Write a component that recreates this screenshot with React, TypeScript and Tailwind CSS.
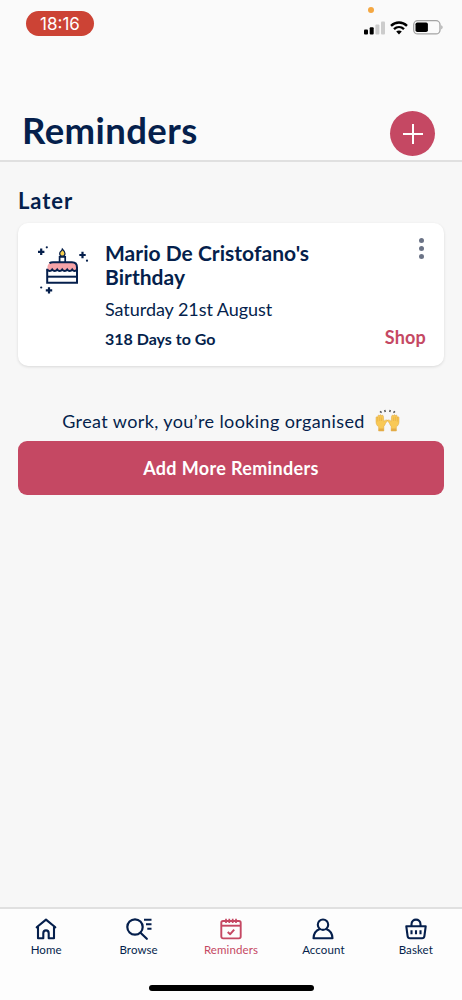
import React from 'react';

interface IconProps {
  className?: string;
}

const SignalIcon: React.FC = () => (
  <svg width="21" height="14" viewBox="0 0 21 14">
    <rect x="0" y="8.6" width="4" height="4.8" rx="1" fill="#000" />
    <rect x="5.7" y="6.3" width="4" height="7.1" rx="1" fill="#000" />
    <rect x="11.4" y="3.5" width="4" height="9.9" rx="1" fill="#cccccc" />
    <rect x="17" y="0.5" width="4" height="12.9" rx="1" fill="#cccccc" />
  </svg>
);

const WifiIcon: React.FC = () => (
  <svg width="18" height="14" viewBox="0 0 18 14" fill="none" stroke="#000" strokeWidth="2.4">
    <path d="M1 4.8C5.6 .4 12.4 .4 17 4.8" />
    <path d="M4 8.1c2.9-2.7 7.1-2.7 10 0" />
    <path d="M9 13.4 6.2 10.6c1.6-1.4 4-1.4 5.600 0Z" fill="#000" stroke="none" />
  </svg>
);

const BatteryIcon: React.FC = () => (
  <svg width="30" height="15" viewBox="0 0 30 15">
    <rect x=".7" y=".7" width="26.3" height="13.2" rx="4" fill="none" stroke="#a3a3a3" strokeWidth="1.3" />
    <path d="M28.300 5.200c1.700.6 1.700 3.600 0 4.200Z" fill="#a3a3a3" />
    <rect x="2.500" y="2.500" width="12.400" height="9.600" rx="1.800" fill="#000" />
  </svg>
);

const CakeIcon: React.FC = () => (
  <svg width="52" height="50" viewBox="0 0 52 50" fill="none" stroke="#051f4c" strokeWidth="2">
    <path d="M10.500 25.500v-2c0-3.200 2-5.200 5.500-5.200h19c3.400 0 5 2 5 5.200v2c-1.300 1.900-3.500 2-4.800 0-1.300 2-3.700 2-5 0-1.300 2-3.700 2-5 0-1.300 2-3.700 2-5 0-1.300 2-3.700 2-5 0-1.300 2-3.400 2-4.700 0Z" fill="#f5a3a8" stroke="none" />
    <path d="M12.500 19.200c1-.8 2.100-1 3.500-1h19c3.300 0 5 2 5 5.200v15.300H10.200V24.800" />
    <path d="M10.200 25.500c1.300 2 3.700 2 5 0 1.300 2 3.700 2 5 0 1.300 2 3.700 2 5 0 1.300 2 3.700 2 5 0 1.300 2 3.700 2 5 0 1.300 2 3.500 1.900 4.800 0" />
    <path d="M10.200 32.700H40" />
    <path d="M22.600 18v-5.100h5.600V18" strokeWidth="1.700" />
    <path d="M25.300 5c2 2 2.700 3.300 2.700 4.600 0 1.500-1.100 2.600-2.600 2.600s-2.700-1.100-2.700-2.600c0-1 .5-1.800 1.200-2.300.7-.6 1.200-1.300 1.400-2.300Z" fill="#f8cf4d" strokeWidth="1.200" />
    <path d="M4.200 4.600v6.400M1 7.800h6.400M45.500 7.800v6.400M42.300 11h6.400M12 43.200v6.400M8.800 46.400h6.400" strokeWidth="2.200" />
    <g fill="#051f4c" stroke="none">
      <circle cx="9.800" cy="3.300" r="1.100" />
      <circle cx="50" cy="16.700" r="1.100" />
      <circle cx="4.200" cy="43.500" r="1.100" />
    </g>
  </svg>
);

const RaisedHandsIcon: React.FC = () => (
  <svg width="25" height="24" viewBox="0 0 25 24">
    <g fill="#f9c956" stroke="#dda43c" strokeWidth=".5">
      <path d="M3.700 22v-4C1.800 16.600 1 14.800 1 12.500V8.700c0-1.200 1.400-1.200 1.600 0l.2-1.600c.1-1.300 1.700-1.200 1.700.1.100-2.100 1.900-2 2 0 .3-1.400 1.800-1.200 1.900.2l.4 5c.7-1 1.800-1.400 3-1.500 1 0 1 1.200.2 1.600-1.500.8-1.800 3.600-3.200 4.900V22Z" />
      <path d="M21.300 22v-4c1.900-1.400 2.700-3.200 2.700-5.500V8.700c0-1.200-1.400-1.200-1.600 0l-.2-1.600c-.1-1.300-1.700-1.200-1.700.1-.1-2.100-1.900-2-2 0-.3-1.400-1.800-1.200-1.900.2l-.4 5c-.7-1-1.800-1.400-3-1.500-1 0-1 1.200-.2 1.600 1.500.8 1.800 3.600 3.200 4.900V22Z" />
    </g>
    <path d="M3.700 19.500h5v2.600h-5Zm12.500 0h5.100v2.600h-5.100Z" fill="#e3ab46" />
    <path d="M2.700 8.500v4M4.700 8v4M6.600 8.500v3.500M18.400 8.500v3.500M20.300 8v4M22.300 8.500v4" stroke="#dfa53b" strokeWidth=".5" />
    <path d="m5 2.400 1.600 1.300M9.700 1l.6 2M15.300 1l-.6 2M20 2.400l-1.600 1.300" stroke="#555" strokeWidth="1.500" />
  </svg>
);

const HomeIcon: React.FC<IconProps> = ({ className }) => (
  <svg className={className} width="22" height="22" viewBox="0 0 22 22" fill="none" stroke="currentColor" strokeWidth="2.100" strokeLinejoin="round" strokeLinecap="round">
    <path d="M1.700 9.300 11 1.600l9.300 7.700" />
    <path d="M3 9.300v11h5.300v-5.100c0-3.800 5.400-3.800 5.400 0v5.100H19v-11" />
  </svg>
);

const BrowseIcon: React.FC<IconProps> = ({ className }) => (
  <svg className={className} width="26" height="22" viewBox="0 0 26 22" fill="none" stroke="currentColor" strokeWidth="2.200" strokeLinecap="round">
    <circle cx="9" cy="9" r="7.700" />
    <path d="m14.500 14.800 6.300 6" />
    <path d="M18 1.700h7.500M20 6.200h5.500M21.300 10.700h4.200" strokeWidth="2" strokeLinecap="butt" />
  </svg>
);

const CalendarIcon: React.FC<IconProps> = ({ className }) => (
  <svg className={className} width="22" height="22" viewBox="0 0 22 22" fill="none" stroke="currentColor" strokeWidth="1.900" strokeLinejoin="round">
    <rect x="1.300" y="3" width="19.400" height="17.400" rx="1.800" />
    <path d="M1.300 7.700h19.400" />
    <path d="M6 .8v4.300M9.300.8v4.300M12.700.8v4.300M16 .8v4.300" strokeWidth="1.700" />
    <path d="m7.700 14 2.500 2.200 4-4.500" strokeWidth="2" />
  </svg>
);

const AccountIcon: React.FC<IconProps> = ({ className }) => (
  <svg className={className} width="22" height="22" viewBox="0 0 22 22" fill="none" stroke="currentColor" strokeWidth="2.100" strokeLinejoin="round">
    <circle cx="11" cy="6.700" r="5.200" />
    <path d="M7.800 11c-3.600 1.300-6.100 4.500-6.300 9.300h19c-.2-4.800-2.700-8-6.300-9.300" />
  </svg>
);

const BasketIcon: React.FC<IconProps> = ({ className }) => (
  <svg className={className} width="22" height="22" viewBox="0 0 22 22" fill="none" stroke="currentColor" strokeWidth="2.100" strokeLinejoin="round">
    <path d="M1.300 8.300h19.400l-1.300 9.900c-.2 1.400-.9 2.100-2.300 2.100H4.900c-1.400 0-2.100-.7-2.300-2.100Z" />
    <path d="M6.500 8V6.300c0-6.200 9-6.200 9 0V8" />
    <path d="M6.500 12.300v4M11 12.300v4M15.500 12.300v4" />
  </svg>
);

const tabs = [
  { label: 'Home', Icon: HomeIcon },
  { label: 'Browse', Icon: BrowseIcon },
  { label: 'Reminders', Icon: CalendarIcon, active: true },
  { label: 'Account', Icon: AccountIcon },
  { label: 'Basket', Icon: BasketIcon }
];

const StatusBar: React.FC = () => (
  <div className="flex h-[46px] items-start justify-between pl-[26px] pr-[19px] pt-[11px]">
    <div className="flex h-[25px] w-[68px] items-center justify-center rounded-full bg-[#cc4335] pt-px font-['Inter',sans-serif] text-[17px] leading-none text-white">
      18:16
    </div>
    <div className="relative flex items-center gap-[5px] pt-[9px]">
      <span className="absolute left-[4px] top-[-4px] size-[6px] rounded-full bg-[#f4a742]" />
      <SignalIcon />
      <WifiIcon />
      <BatteryIcon />
    </div>
  </div>
);

const ReminderCard: React.FC = () => (
  <article className="flex h-[143px] rounded-[10px] bg-white pl-[19px] pr-[18px] shadow-[0_1px_3px_rgba(0,0,0,0.12)]">
    <div className="w-[68px] shrink-0 pt-[21px]">
      <CakeIcon />
    </div>
    <div className="flex-1 pt-[18px]">
      <h3 className="w-[230px] text-[21px] font-bold leading-6 tracking-[0.03px]">
        Mario De Cristofano's Birthday
      </h3>
      <p className="mt-[8px] text-[18px] leading-6 tracking-[-0.05px]">Saturday 21st August</p>
      <p className="mt-[6px] text-[16px] font-bold leading-6">318 Days to Go</p>
    </div>
    <div className="flex flex-col items-end justify-between pb-[17px] pt-[15px]">
      <button aria-label="More options" className="flex w-[9px] flex-col items-center gap-[3px]">
        <span className="size-[5px] rounded-full bg-[#6b7386]" />
        <span className="size-[5px] rounded-full bg-[#6b7386]" />
        <span className="size-[5px] rounded-full bg-[#6b7386]" />
      </button>
      <button className="text-[18px] font-bold leading-6 tracking-[0.2px] text-[#c54863]">Shop</button>
    </div>
  </article>
);

const TabBar: React.FC = () => (
  <nav className="flex h-[93px] flex-col items-center border-t-2 border-[#e0e0e0] bg-[#fdfdfd]">
    <div className="grid w-full grid-cols-5">
      {tabs.map(({ label, Icon, active }) => (
        <button
          key={label}
          className={`flex flex-col items-center pt-[9px] ${active ? 'text-[#c54863]' : 'text-[#051f4c]'}`}
        >
          <Icon />
          <span className="mt-[2px] text-[11.5px] leading-4 tracking-[0.1px]">{label}</span>
        </button>
      ))}
    </div>
    <div className="mb-[9px] mt-auto h-[6px] w-[165px] rounded-full bg-black" />
  </nav>
);

const App: React.FC = () => {
  return (
    <div className="flex h-[1000px] w-[462px] flex-col bg-[#f7f7f7] font-['Lato',sans-serif] text-[#051f4c]">
      <header className="flex h-[162px] flex-col justify-between border-b-2 border-[#e0e0e0] bg-[#fafafa]">
        <StatusBar />
        <div className="flex items-end justify-between pb-[4px] pl-[22px] pr-[27px]">
          <h1 className="mb-[4px] text-[36.5px] font-bold leading-[44px] tracking-[0.4px]">Reminders</h1>
          <button aria-label="Add reminder" className="flex size-[45px] items-center justify-center rounded-full bg-[#c54863]">
            <svg width="20" height="20" viewBox="0 0 20 20" stroke="#fff" strokeWidth="2">
              <path d="M10 0v20M0 10h20" />
            </svg>
          </button>
        </div>
      </header>

      <main className="flex-1 px-[18px] pt-[25px]">
        <h2 className="mb-[8px] text-[22px] font-bold leading-7 tracking-[0.9px]">Later</h2>
        <ReminderCard />
        <div className="mt-[43px] flex items-center justify-center gap-[10px]">
          <p className="text-[18px] leading-6 tracking-[0.39px]">Great work, you’re looking organised</p>
          <RaisedHandsIcon />
        </div>
        <button className="mt-[8px] h-[54px] w-full rounded-[9px] bg-[#c54863] text-[18px] font-bold tracking-[0.35px] text-white">
          Add More Reminders
        </button>
      </main>

      <TabBar />
    </div>
  );
};

export default App;
